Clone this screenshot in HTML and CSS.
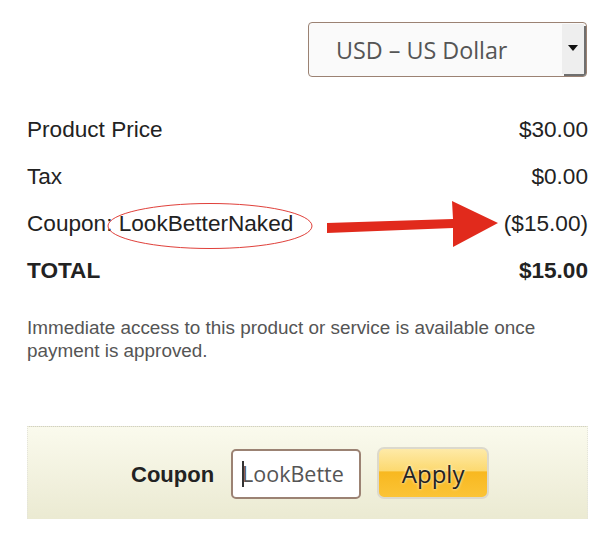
FILE: index.html
```html
<!DOCTYPE html>
<html>
<head>
<meta charset="utf-8">
<link rel="stylesheet" href="styles.css">
</head>
<body>
<div class="page">
  <div class="currency-row">
    <div class="select">
      <span class="select-text">USD – US Dollar</span>
      <span class="select-btn"><span class="caret"></span></span>
    </div>
  </div>
  <div class="summary">
    <div class="row"><span>Product Price</span><span>$30.00</span></div>
    <div class="row"><span>Tax</span><span>$0.00</span></div>
    <div class="row"><span>Coupon: LookBetterNaked</span><span>($15.00)</span></div>
    <div class="row total"><span>TOTAL</span><span>$15.00</span></div>
    <svg class="annot" width="600" height="80" viewBox="0 190 600 80">
      <ellipse cx="210" cy="226" rx="102" ry="22.5" fill="none" stroke="#e0403a" stroke-width="1"/>
      <polygon points="327,223 453,219 452,201 498,223 453,247 453,228 327,233" fill="#e12a1c"/>
    </svg>
  </div>
  <p class="note">Immediate access to this product or service is available once payment is approved.</p>
  <div class="coupon-box">
    <span class="coupon-label">Coupon</span>
    <div class="coupon-input"><span class="cursor"></span><span class="input-text">LookBette</span></div>
    <div class="apply">Apply</div>
  </div>
</div>
</body>
</html>
```
FILE: styles.css
```css
html, body { margin: 0; padding: 0; background: #fff; }
.page {
  width: 600px;
  height: 536px;
  padding: 22px 12px 0 27px;
  box-sizing: border-box;
  font-family: "Liberation Sans", Arial, sans-serif;
  color: #222;
  overflow: hidden;
}
.currency-row { display: flex; justify-content: flex-end; padding-right: 1px; }
.select {
  width: 279px;
  height: 55px;
  box-sizing: border-box;
  border: 1px solid #9b8273;
  border-radius: 4px;
  background: #fafafa;
  display: flex;
  align-items: stretch;
  overflow: hidden;
}
.select-text {
  flex: 1;
  font-family: "Open Sans", sans-serif;
  font-size: 23.3px;
  color: #555;
  line-height: 55px;
  padding-left: 27px;
}
.select-btn {
  width: 22px;
  margin: 1px 2px 2px 0;
  background: #eee;
  box-shadow: 2px 2px 0 #6f6f6f;
  display: flex;
  align-items: center;
  justify-content: center;
}
.caret {
  width: 0; height: 0;
  border-left: 5px solid transparent;
  border-right: 5px solid transparent;
  border-top: 6px solid #111;
  margin-top: -2px;
}
.summary { position: relative; margin-top: 29px; }
.row {
  display: flex;
  justify-content: space-between;
  font-size: 22.6px;
  line-height: 47px;
  height: 47px;
}
.total { font-weight: bold; }
.annot { position: absolute; left: -27px; top: 84px; pointer-events: none; }
.note {
  margin: 22px 0 0;
  font-size: 18.9px;
  line-height: 23px;
  color: #555;
  padding-right: 0;
}
.coupon-box {
  margin-top: 64px;
  width: 561px;
  height: 93px;
  box-sizing: border-box;
  border-top: 1px dotted #d0d0c4;
  border-left: 1px dotted #e4e4da;
  border-right: 1px dotted #e4e4da;
  background: linear-gradient(#fafaed, #ebead2);
  display: flex;
  align-items: center;
  padding-left: 103px;
  padding-top: 3px;
}
.coupon-label { font-weight: bold; font-size: 22px; color: #222; margin-right: 17px; }
.coupon-input {
  width: 130px;
  height: 50px;
  box-sizing: border-box;
  border: 2px solid #9b8273;
  border-radius: 5px;
  background: #fff;
  font-family: "Open Sans", sans-serif;
  font-size: 21.5px;
  color: #555;
  padding-left: 9px;
  white-space: nowrap;
  display: flex;
  align-items: center;
  margin-right: 16px;
  margin-top: -2px;
  overflow: hidden;
}
.input-text { display: block; }
.cursor { display: inline-block; width: 2px; height: 26px; background: #333; margin-right: -2px; position: relative; z-index: 1; }
.apply {
  width: 112px;
  height: 52px;
  box-sizing: border-box;
  border: 2px solid #dcd9cc;
  border-radius: 7px;
  background: linear-gradient(#feeaa8 0%, #fcd970 45%, #f8b820 48%, #fbc437 100%);
  font-family: "Open Sans", sans-serif;
  font-size: 24px;
  color: #222;
  text-shadow: 0 0 3px #fff;
  display: flex;
  align-items: center;
  justify-content: center;
  margin-top: -3px;
}
```
